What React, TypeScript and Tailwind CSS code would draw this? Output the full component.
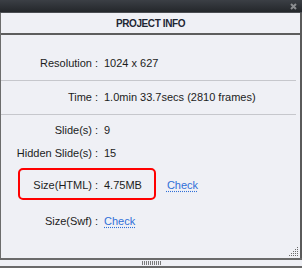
import React from "react";

type Row = { label: string; value?: string; link?: boolean };

function InfoRow({ label, value, link }: Row) {
  return (
    <div className="flex h-[14px] items-center leading-[14px]">
      <div className="w-[91px] text-right whitespace-nowrap">{label}</div>
      <div className="w-[9px] text-center">:</div>
      <div className="pl-[3px] flex whitespace-nowrap">
        {value && <span>{value}</span>}
        {link && (
          <a className={`${value ? "ml-[25px]" : ""} text-[#2f6fd8] underline decoration-dotted underline-offset-2 cursor-pointer`}>
            Check
          </a>
        )}
      </div>
    </div>
  );
}

function ResizeGrip() {
  const dots: React.ReactNode[] = [];
  for (let r = 0; r < 5; r++) {
    for (let c = 4 - r; c < 5; c++) {
      dots.push(<rect key={`${r}-${c}`} x={c * 2} y={r * 2} width="1" height="1" fill="#6a6a6a" />);
    }
  }
  return (
    <svg width="10" height="10" viewBox="0 0 10 10">
      {dots}
    </svg>
  );
}

export default function App() {
  return (
    <div className="w-[302px] h-[268px] flex flex-col bg-[#eff0f5] text-[11px] text-[#1c1c1c] font-['Liberation_Sans',Arial,sans-serif]">
      {/* title bar */}
      <div className="h-[13px] flex items-center justify-end pr-[5px] bg-gradient-to-b from-[#3b3f45] to-[#24272b] border-b border-[#4a4d52]">
        <svg width="7" height="7" viewBox="0 0 7 7">
          <path d="M1 1L6 6M6 1L1 6" stroke="#8b8d90" strokeWidth="2" />
        </svg>
      </div>

      <div className="flex-1 flex flex-col border-l border-[#6c6c6c] border-r-2 border-r-[#5a5a5a] relative">
        <div className="h-[22px] flex items-center justify-center border-b-2 border-[#5d5d5d] font-bold text-[10px] tracking-[-0.4px] text-[#1e2633]">
          PROJECT INFO
        </div>

        <div className="pt-[21px] pb-[10px]">
          <InfoRow label="Resolution" value="1024 x 627" />
        </div>
        <div className="h-px bg-[#c6c7cc] mr-[4px]" />

        <div className="pt-[9px] pb-[10px]">
          <InfoRow label="Time" value="1.0min 33.7secs (2810 frames)" />
        </div>
        <div className="h-px bg-[#c6c7cc] mr-[4px]" />

        <div className="pt-[8px] flex flex-col">
          <InfoRow label="Slide(s)" value="9" />
          <div className="mt-[9px]">
            <InfoRow label="Hidden Slide(s)" value="15" />
          </div>
          <div className="mt-[18px] relative">
            <InfoRow label="Size(HTML)" value="4.75MB" link />
            <div className="absolute left-[17px] top-[-10px] w-[138px] h-[32px] border-2 border-[#ff0000] rounded-[5px]" />
          </div>
          <div className="mt-[22px]">
            <InfoRow label="Size(Swf)" link />
          </div>
        </div>

        <div className="absolute right-[1px] bottom-[1px]">
          <ResizeGrip />
        </div>
      </div>

      {/* bottom drag bar */}
      <div className="h-[10px] border-t-2 border-b-2 border-[#6a6a6a] flex items-center justify-center">
        <div className="flex gap-[1px]">
          {Array.from({ length: 10 }).map((_, i) => (
            <div key={i} className="w-px h-[4px] bg-[#7a7a7a]" />
          ))}
        </div>
      </div>
    </div>
  );
}
